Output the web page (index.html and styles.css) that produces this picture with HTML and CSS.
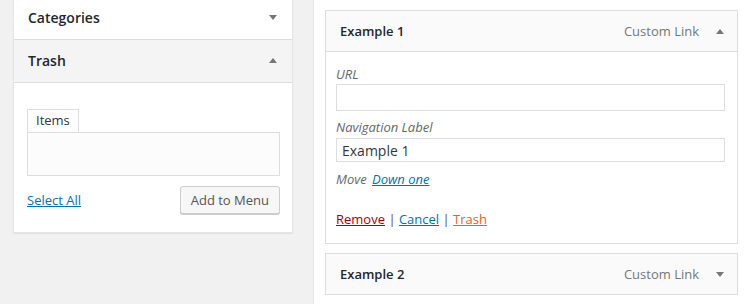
FILE: index.html
```html
<!DOCTYPE html>
<html lang="en">
<head>
  <meta charset="UTF-8">
  <title>Menus</title>
  <link rel="stylesheet" href="styles.css">
</head>
<body>
  <div class="page">
    <!-- Coluna esquerda: caixas de itens -->
    <div class="sidebar">
      <div class="section-title">
        <span>Categories</span>
        <span class="arrow arrow-down"></span>
      </div>
      <div class="section-title open">
        <span>Trash</span>
        <span class="arrow arrow-up"></span>
      </div>
      <div class="section-body">
        <div class="tab">Items</div>
        <div class="tab-panel"></div>
        <div class="section-actions">
          <a href="#" class="select-all">Select All</a>
          <button class="button">Add to Menu</button>
        </div>
      </div>
    </div>

    <!-- Coluna direita: estrutura do menu -->
    <div class="menu-management">
      <div class="menu-item">
        <div class="item-handle">
          <span class="item-title">Example 1</span>
          <span class="item-controls">
            <span class="item-type">Custom Link</span>
            <span class="arrow arrow-up"></span>
          </span>
        </div>
        <div class="item-settings">
          <label class="field-label">URL</label>
          <input class="field-input field-url" type="text" value="">
          <label class="field-label nav-label">Navigation Label</label>
          <input class="field-input field-nav" type="text" value="Example 1">
          <div class="move-row">
            <span>Move</span>
            <a href="#" class="move-link">Down one</a>
          </div>
          <div class="item-actions">
            <a href="#" class="remove">Remove</a> <span class="sep">|</span>
            <a href="#" class="cancel">Cancel</a> <span class="sep">|</span>
            <a href="#" class="trash">Trash</a>
          </div>
        </div>
      </div>

      <div class="menu-item closed">
        <div class="item-handle">
          <span class="item-title">Example 2</span>
          <span class="item-controls">
            <span class="item-type">Custom Link</span>
            <span class="arrow arrow-down"></span>
          </span>
        </div>
      </div>
    </div>
  </div>
</body>
</html>
```

FILE: styles.css
```css
/* Reset básico */
* {
  margin: 0;
  padding: 0;
  box-sizing: border-box;
}
body {
  font-family: 'Open Sans', sans-serif;
  font-size: 13px;
  color: #23282d;
  background: #f1f1f1;
  width: 750px;
  height: 304px;
  overflow: hidden;
}
a {
  color: #0073aa;
}
.page {
  display: flex;
  align-items: flex-start;
  height: 304px;
}
/* Setas */
.arrow {
  display: inline-block;
  width: 0;
  height: 0;
  border-left: 4px solid transparent;
  border-right: 4px solid transparent;
}
.arrow-down {
  border-top: 5px solid #72777c;
}
.arrow-up {
  border-bottom: 5px solid #72777c;
}
/* Coluna esquerda */
.sidebar {
  width: 280px;
  margin-left: 13px;
  margin-top: -4px;
  background: #fff;
  border: 1px solid #e5e5e5;
  box-shadow: 0 1px 1px rgba(0, 0, 0, 0.06);
}
.section-title {
  height: 43px;
  display: flex;
  align-items: center;
  justify-content: space-between;
  padding: 0 15px 2px 14px;
  font-size: 14px;
  font-weight: 600;
  border-bottom: 1px solid #ddd;
}
.section-title.open {
  background: #f4f4f4;
}
.section-body {
  padding: 26px 12px 18px 13px;
}
.tab {
  display: inline-block;
  height: 23px;
  line-height: 21px;
  padding: 0 8px;
  border: 1px solid #ddd;
  border-bottom: none;
  background: #fdfdfd;
  color: #32373c;
}
.tab-panel {
  height: 44px;
  border: 1px solid #ddd;
  background: #fcfcfc;
}
.section-actions {
  display: flex;
  justify-content: space-between;
  align-items: center;
  margin-top: 10px;
}
.button {
  font-family: inherit;
  font-size: 13px;
  color: #555;
  height: 28px;
  padding: 0 10px;
  border: 1px solid #ccc;
  border-radius: 3px;
  background: #f7f7f7;
  box-shadow: 0 1px 0 #ccc;
}
/* Coluna direita */
.menu-management {
  flex: 1;
  height: 304px;
  margin-left: 20px;
  padding: 10px 12px 0 11px;
  background: #fff;
  border-left: 1px solid #e5e5e5;
}
.menu-item + .menu-item {
  margin-top: 9px;
}
.item-handle {
  height: 42px;
  display: flex;
  align-items: center;
  justify-content: space-between;
  padding: 0 13px 0 14px;
  border: 1px solid #ddd;
  background: #fafafa;
}
.item-title {
  font-weight: 600;
}
.item-controls {
  display: flex;
  align-items: center;
  gap: 17px;
}
.item-type {
  color: #72777c;
}
.item-settings {
  padding: 13px 12px 15px 10px;
  border: 1px solid #ddd;
  border-top: none;
}
.field-label {
  display: block;
  line-height: 18px;
  font-style: italic;
  color: #666;
}
.field-input {
  display: block;
  width: 100%;
  border: 1px solid #ddd;
  font-family: inherit;
  font-size: 14px;
  color: #32373c;
  padding: 0 5px;
  background: #fff;
}
.field-url {
  height: 27px;
  margin-top: 1px;
}
.nav-label {
  margin-top: 7px;
}
.field-nav {
  height: 24px;
  margin-top: 2px;
}
.move-row {
  margin-top: 8px;
  line-height: 18px;
  font-style: italic;
  color: #666;
}
.move-link {
  margin-left: 2px;
}
.item-actions {
  margin-top: 22px;
  line-height: 18px;
  color: #555;
}
.remove {
  color: #a00;
}
.trash {
  color: #e2602f;
}
```
